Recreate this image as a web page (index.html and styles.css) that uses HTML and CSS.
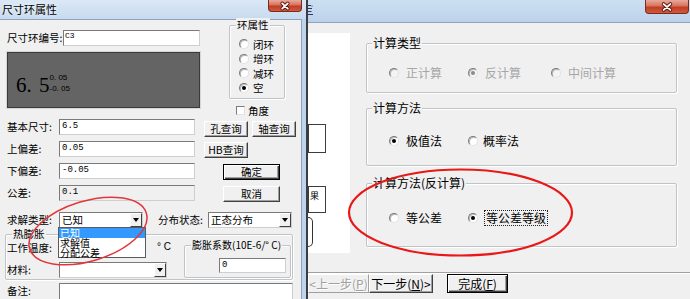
FILE: index.html
```html
<!DOCTYPE html>
<html lang="zh-CN">
<head>
<meta charset="utf-8">
<title>尺寸环属性</title>
<link rel="stylesheet" href="styles.css">
</head>
<body>
<div class="win win-right">
  <div class="tb tb-r">
    <svg class="tb-frag" width="6" height="12" viewBox="0 0 6 12"><path d="M0 1.5 H3 M0 4.5 H4 M0 7.5 H3.5 M0 10.5 H5" stroke="#3a3270" stroke-width="1.2"/><path d="M4 1 V3" stroke="#6a88c8" stroke-width="1"/></svg>
    <div class="close close-r"><svg width="44" height="14" viewBox="0 0 44 14"><path d="M18.5 4 L25.5 10 M25.5 4 L18.5 10" stroke="#5a1a10" stroke-width="4" stroke-linecap="round"/><path d="M18.5 4 L25.5 10 M25.5 4 L18.5 10" stroke="#fff" stroke-width="2" stroke-linecap="round"/></svg></div>
  </div>
  <div class="client-r">
    <div class="wiz-main">
      <div class="side">
        <div class="sbox sbox1"></div>
        <div class="sbox sbox2">果</div>
        <div class="sarc"></div>
      </div>
      <div class="groups">
        <div class="grp rg g1">
          <span class="gt">计算类型</span>
          <div class="rrow dis">
            <span class="rad"><i class="rb"></i>正计算</span>
            <span class="rad"><i class="rb on"></i>反计算</span>
            <span class="rad"><i class="rb"></i>中间计算</span>
          </div>
        </div>
        <div class="grp rg g2">
          <span class="gt">计算方法</span>
          <div class="rrow">
            <span class="rad"><i class="rb on"></i>极值法</span>
            <span class="rad rad-b"><i class="rb"></i>概率法</span>
          </div>
        </div>
        <div class="grp rg g3">
          <span class="gt">计算方法(反计算)</span>
          <div class="rrow">
            <span class="rad"><i class="rb"></i>等公差</span>
            <span class="rad"><i class="rb on"></i><span class="focus">等公差等级</span></span>
          </div>
        </div>
      </div>
    </div>
    <div class="sep"></div>
    <div class="btns">
      <div class="wbtn wb1">&lt;上一步(<u>P</u>)</div>
      <div class="wbtn wb2">下一步(<u>N</u>)&gt;</div>
      <div class="wbtn wb3">完成(<u>F</u>)</div>
    </div>
  </div>
</div>

<div class="win win-left">
  <div class="tb tb-l">
    <span class="tb-title">尺寸环属性</span>
    <div class="close close-l"><svg width="34" height="12" viewBox="0 0 34 12"><path d="M14 3.2 L20 8.8 M20 3.2 L14 8.8" stroke="#5a1a10" stroke-width="3.8" stroke-linecap="round"/><path d="M14 3.2 L20 8.8 M20 3.2 L14 8.8" stroke="#fff" stroke-width="1.9" stroke-linecap="round"/></svg></div>
  </div>
  <div class="client-l">
    <div class="top">
      <div class="top-left">
        <div class="frow r-id"><span class="lbl lid">尺寸环编号:</span><div class="inp iid">C3</div></div>
        <div class="panel"><span class="big">6. 5</span><span class="tol"><span>0. 05</span><span>-0. 05</span></span></div>
      </div>
      <div class="top-right">
        <div class="grp lg ring">
          <span class="gt">环属性</span>
          <div class="lrad"><i class="rb"></i>闭环</div>
          <div class="lrad"><i class="rb"></i>增环</div>
          <div class="lrad"><i class="rb"></i>减环</div>
          <div class="lrad"><i class="rb on"></i>空</div>
        </div>
        <div class="chk"><i class="cb"></i>角度</div>
      </div>
    </div>

    <div class="frow"><span class="lbl">基本尺寸:</span><div class="inp">6.5</div><div class="btn b-q">孔查询</div><div class="btn b-q b-q2">轴查询</div></div>
    <div class="frow"><span class="lbl">上偏差:</span><div class="inp">0.05</div><div class="btn b-hb">HB查询</div></div>
    <div class="frow"><span class="lbl">下偏差:</span><div class="inp">-0.05</div><div class="btn b-ok b-def">确定</div></div>
    <div class="frow"><span class="lbl">公差:</span><div class="inp ro">0.1</div><div class="btn b-ok">取消</div></div>

    <div class="frow rc">
      <span class="lbl">求解类型:</span>
      <div class="combo"><span class="ctext">已知</span><span class="arr"></span></div>
      <span class="lbl lbl2">分布状态:</span>
      <div class="combo"><span class="ctext">正态分布</span><span class="arr"></span></div>
    </div>

    <div class="grp lg hot">
      <span class="gt">热膨胀</span>
      <div class="hot-left">
        <div class="hrow hrow1"><span class="lbl">工作温度:</span><div class="inp iw"></div><span class="deg">° C</span></div>
        <div class="hrow hrow2"><span class="lbl">材料:</span><div class="combo cm"><span class="ctext"></span><span class="arr"></span></div></div>
      </div>
      <div class="grp lg exp">
        <span class="gt gt-s">膨胀系数(10E-6/° C)</span>
        <div class="inp ie">0</div>
      </div>
    </div>

    <div class="frow note"><span class="lbl">备注:</span><div class="inp inote"></div></div>

    <div class="dd">
      <div class="sel">已知</div>
      <div>求解值</div>
      <div>分配公差</div>
    </div>
  </div>
</div>

<svg class="marks" width="690" height="299" viewBox="0 0 690 299">
  <ellipse cx="88" cy="231" rx="61" ry="30" transform="rotate(-17 88 231)" fill="none" stroke="#e2363a" stroke-width="1.5"/>
  <ellipse cx="460.5" cy="212.5" rx="111.5" ry="43" fill="none" stroke="#e81818" stroke-width="2.2"/>
</svg>
</body>
</html>
```

FILE: styles.css
```css
* { box-sizing: border-box; margin: 0; padding: 0; }
html, body { width: 690px; height: 299px; overflow: hidden; }
body {
  position: relative;
  background: #c2d7ee;
  font-family: "Noto Sans CJK SC", "Noto Sans", sans-serif;
  font-size: 10.5px;
  color: #000;
}

/* windows on the desktop */
.win { position: absolute; top: 0; height: 299px; overflow: hidden; display: flex; flex-direction: column; }
.win-left { left: 0; width: 306px; z-index: 2; background: #bdd4ec; }
.win-right { left: 306px; width: 384px; z-index: 1; background: #bdd4ec; border-left: 2px solid #3a3d42; }

.tb { display: flex; align-items: flex-start; flex: none; overflow: hidden; }
.tb-l { height: 19px; background: linear-gradient(#dbe8f6, #c7daef); }
.tb-r { height: 22px; background: linear-gradient(#cde0f2, #bcd2ea); }
.tb-title { padding-left: 2px; line-height: 18px; font-size: 11px; text-shadow: 0 0 4px #fff; }
.tb-frag { display: block; margin-top: 4px; flex: none; }

.close {
  margin-left: auto;
  background: linear-gradient(#e9a99b, #d6735e 45%, #c23d22 55%, #cf5a3f);
  border: 1px solid #7b2a1e; border-top: none;
  border-radius: 0 0 4px 4px;
  display: flex;
}
.close svg { display: block; }
.close-l { width: 34px; height: 12px; margin-right: 4px; }
.close-r { width: 44px; height: 14px; margin-right: 1px; }

/* ---------- left dialog ---------- */
.client-l {
  position: relative;
  width: 302px; flex: 1;
  background: #f0f0f0;
  border-top: 1px solid #8ea4bd;
  border-right: 1px solid #8ea4bd;
  padding-left: 7px;
}
.top { display: flex; height: 99px; }
.top-left { width: 193px; }
.frow { display: flex; align-items: flex-start; height: 22px; }
.r-id { margin-top: 10px; height: 16px; }
.lbl { width: 52px; flex: none; line-height: 16px; white-space: nowrap; }
.lid { width: 56px; }

.inp {
  width: 136px; height: 16px; flex: none;
  background: #fff;
  border: 1px solid; border-color: #7a7a7a #cfcfcf #cfcfcf #7a7a7a;
  font-family: "Liberation Mono", monospace; font-size: 9px; line-height: 12px;
  padding-left: 2px;
}
.inp.ro { background: #f0f0f0; }
.iid { width: 137px; font-size: 8px; line-height: 9px; padding-left: 1px; }

.panel {
  margin-top: 6px; height: 56px;
  background: #646464;
  border: 1px solid #3a3a3a;
  box-shadow: 0 0 0 1px #d6d6d6;
  display: flex; align-items: flex-start;
  padding-left: 8px;
}
.big {
  margin-top: 21px;
  font-family: "Liberation Serif", serif; font-size: 21px; line-height: 22px; word-spacing: 2px;
}
.tol {
  margin-top: 19px;
  display: flex; flex-direction: column;
  font-family: "Liberation Sans", sans-serif; font-size: 8px; line-height: 11px;
}

.top-right { margin-left: 29px; }
.grp { position: relative; border: 1px solid #bfc4c8; border-radius: 2px; box-shadow: inset 1px 1px #fff, 1px 1px #fff; }
.gt { position: absolute; top: -8px; left: 6px; padding: 0 1px; background: #f0f0f0; line-height: 14px; white-space: nowrap; }
.ring { margin-top: 5px; width: 56px; height: 74px; padding: 11px 0 0 9px; }
.lrad { display: flex; align-items: center; gap: 4px; height: 14.5px; }

.rb {
  position: relative; flex: none;
  width: 10px; height: 10px; border-radius: 50%;
  background: #fff;
  border: 1px solid; border-color: #7a7a7a #e2e2e2 #e2e2e2 #7a7a7a;
  box-shadow: inset 1px 1px #b8b8b8;
}
.rb.on::after { content: ""; position: absolute; left: 2px; top: 2px; width: 4px; height: 4px; border-radius: 50%; background: #000; }

.chk { margin-top: 7px; margin-left: 7px; display: flex; align-items: center; gap: 3px; height: 9px; }
.cb { width: 9px; height: 9px; flex: none; background: #fff; border: 1px solid; border-color: #7a7a7a #e2e2e2 #e2e2e2 #7a7a7a; }

.btn {
  height: 16px; flex: none;
  text-align: center; line-height: 14px;
  background: #f0f0f0;
  border: 1px solid; border-color: #fff #404040 #404040 #fff;
  box-shadow: inset -1px -1px #a0a0a0;
}
.b-q { margin-left: 9px; margin-top: 2px; width: 44px; }
.b-q2 { margin-left: 4px; }
.b-hb { margin-left: 9px; margin-top: 1px; width: 44px; }
.b-ok { margin-left: 28px; margin-top: 1px; width: 57px; }
.b-def { border-color: #000; box-shadow: inset 1px 1px #fff, inset -1px -1px #404040, inset -2px -2px #a0a0a0; }

.rc { margin-top: 5px; height: 16px; }
.lbl2 { margin-left: 15px; width: 50px; }
.combo {
  display: flex; width: 84px; height: 16px; flex: none;
  background: #fff;
  border: 1px solid; border-color: #7a7a7a #cfcfcf #cfcfcf #7a7a7a;
}
.ctext { flex: 1; padding-left: 2px; line-height: 14px; white-space: nowrap; overflow: hidden; }
.arr {
  position: relative; flex: none;
  width: 12px; height: 14px;
  background: #f0f0f0;
  border: 1px solid; border-color: #fff #404040 #404040 #fff;
}
.arr::after {
  content: ""; position: absolute; left: 2px; top: 4px;
  border-top: 4px solid #000; border-left: 3.5px solid transparent; border-right: 3.5px solid transparent;
}

.hot { margin-top: 6px; margin-left: -2px; width: 288px; height: 46px; display: flex; padding-left: 1px; }
.hot-left { width: 177px; }
.hrow { display: flex; align-items: flex-start; height: 16px; }
.hrow1 { margin-top: 5px; }
.hrow2 { margin-top: 6px; }
.iw { width: 86px; }
.deg { margin-left: 12px; line-height: 14px; font-family: "Liberation Sans", sans-serif; font-size: 10px; }
.cm { width: 108px; }
.exp { margin-top: 10px; width: 107px; height: 33px; padding: 12px 0 0 34px; }
.gt-s { font-size: 10px; left: 6px; }
.ie { width: 67px; height: 15px; }

.note { margin-top: 3px; height: 17px; }
.inote { width: 234px; height: 17px; }

.dd {
  position: absolute; left: 58px; top: 207px; z-index: 3;
  width: 88px; height: 31px;
  background: #fff; border: 1px solid #5a5a5a;
  font-size: 10px;
}
.dd div { height: 9.5px; line-height: 9.5px; padding-left: 1px; white-space: nowrap; }
.dd .sel { height: 10px; background: #3399ff; color: #fff; }

/* ---------- right wizard window ---------- */
.client-r {
  flex: 1;
  background: #f0f0f0;
  border-top: 1px solid #8ea4bd;
  display: flex; flex-direction: column;
}
.wiz-main { display: flex; height: 230px; }
.side {
  margin-top: 10px; width: 42px; height: 220px;
  background: #fff;
  display: flex; flex-direction: column; align-items: flex-start;
}
.sbox { width: 18px; border: 1px solid #3c3c3c; background: #fff; }
.sbox1 { margin-top: 91px; height: 29px; }
.sbox2 { margin-top: 33px; height: 27px; font-size: 9px; line-height: 10px; padding: 4px 0 0 1px; }
.sarc { margin-top: 4px; width: 5px; height: 30px; border: 1px solid #333; border-left: none; border-radius: 0 15px 15px 0; }

.groups { margin-left: 16px; margin-top: 20px; width: 311px; font-size: 12px; }
.rg .gt { top: -8px; left: 5px; }
.g1 { height: 50px; padding-top: 22px; }
.g2 { margin-top: 15px; height: 58px; padding-top: 25px; }
.g3 { margin-top: 17px; height: 64px; padding-top: 27px; }
.rrow { display: grid; grid-template-columns: 79px 83px auto; padding-left: 22px; height: 14px; align-items: center; }
.rad { display: flex; align-items: center; gap: 7px; white-space: nowrap; line-height: 14px; }
.rad-b { gap: 5px; }
.dis { color: #a6a6a6; }
.dis .rb { background: #f4f4f4; }
.dis .rb.on::after { background: #8a8a8a; }
.focus { outline: 1px dotted #222; outline-offset: 0; padding: 0 1px; }

.sep { margin-top: 19px; height: 2px; border-top: 1px solid #a0a0a0; border-bottom: 1px solid #fff; }
.btns { display: flex; height: 19px; }
.wbtn {
  height: 19px;
  font-size: 12px; line-height: 17px; text-align: center; white-space: nowrap;
  background: #f0f0f0;
  border: 1px solid; border-color: #fff #404040 #404040 #fff;
  box-shadow: inset -1px -1px #a0a0a0;
}
.wb1 { width: 61px; color: #a0a0a0; text-shadow: 1px 1px #fff; border-color: #fff #a0a0a0 #a0a0a0 #fff; box-shadow: none; }
.wb2 { width: 64px; }
.wb3 { width: 61px; margin-left: 14px; border-color: #000; box-shadow: inset 1px 1px #fff, inset -1px -1px #404040, inset -2px -2px #a0a0a0; }

.marks { position: absolute; left: 0; top: 0; z-index: 10; pointer-events: none; }
```
